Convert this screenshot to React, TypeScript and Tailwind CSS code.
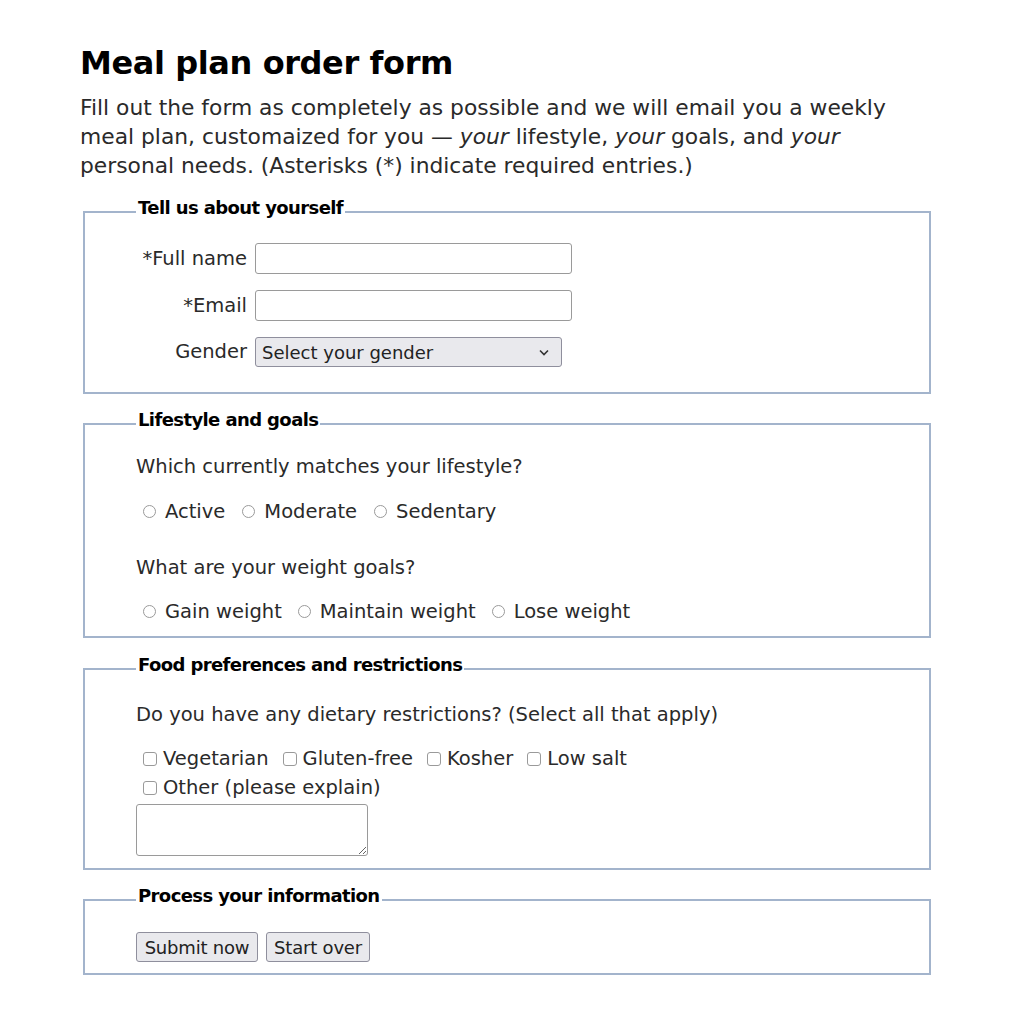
import React from 'react';

const body = { fontFamily: '"DejaVu Sans", Verdana, sans-serif' };

function Radio({ name, label }: { name: string; label: string }) {
  return (
    <label className="flex items-center gap-[9px]">
      <input
        type="radio"
        name={name}
        className="appearance-none w-[13px] h-[13px] rounded-full border border-[#9a9a9a] bg-white"
      />
      <span>{label}</span>
    </label>
  );
}

function Check({ label }: { label: string }) {
  return (
    <label className="flex items-center gap-[6px]">
      <input
        type="checkbox"
        className="appearance-none w-[14px] h-[14px] rounded-[3px] border border-[#9a9a9a] bg-white"
      />
      <span>{label}</span>
    </label>
  );
}

function Section({ title, children, className }: { title: string; children: React.ReactNode; className?: string }) {
  return (
    <fieldset className={`mx-[3px] border-2 border-[#a3b4cc] pl-[51px] pr-4 ${className ?? ''}`}>
      <legend className="px-[2px] pb-[8px] text-[18px] leading-[24px] font-bold text-black tracking-[-0.6px]">
        {title}
      </legend>
      {children}
    </fieldset>
  );
}

export default function App() {
  return (
    <div className="bg-white min-h-[1019px] text-[#2a2a2a]" style={body}>
      <div className="w-[854px] ml-[80px] pt-[43px]">
        <h1 className="text-[32px] leading-[40px] font-bold text-black tracking-[-0.4px]">Meal plan order form</h1>
        <p className="mt-[10px] text-[21.8px] leading-[29px]">
          Fill out the form as completely as possible and we will email you a weekly
          <br />
          meal plan, customaized for you — <em>your</em> lifestyle, <em>your</em> goals, and <em>your</em>
          <br />
          personal needs. (Asterisks (*) indicate required entries.)
        </p>

        <div className="text-[19.5px]">
          <Section title="Tell us about yourself" className="mt-[16px] pt-[15px] pb-[25px]">
            <div className="grid grid-cols-[111px_auto] gap-x-[8px] gap-y-[16px] items-center justify-start">
              <label className="text-right">*Full name</label>
              <input type="text" className="w-[317px] h-[31px] rounded-[3px] border border-[#9a9a9a] bg-white" />
              <label className="text-right">*Email</label>
              <input type="email" className="w-[317px] h-[31px] rounded-[3px] border border-[#9a9a9a] bg-white" />
              <label className="text-right">Gender</label>
              <div className="w-[307px] h-[30px] rounded-[3px] border border-[#8f8f9d] bg-[#e9e9ed] flex items-center justify-between pl-[6px] pr-[12px] text-[18px] text-[#222]">
                <span>Select your gender</span>
                <svg width="10" height="7" viewBox="0 0 10 7" fill="none">
                  <path d="M1 1.5L5 5.5L9 1.5" stroke="#333" strokeWidth="1.6" />
                </svg>
              </div>
            </div>
          </Section>

          <Section title="Lifestyle and goals" className="mt-[14px] pt-[12px] pb-[10px]">
            <p className="leading-[29px]">Which currently matches your lifestyle?</p>
            <div className="mt-[16px] ml-[7px] flex gap-[17px] leading-[29px]">
              <Radio name="life" label="Active" />
              <Radio name="life" label="Moderate" />
              <Radio name="life" label="Sedentary" />
            </div>
            <p className="mt-[27px] leading-[29px]">What are your weight goals?</p>
            <div className="mt-[15px] ml-[7px] flex gap-[16px] leading-[29px]">
              <Radio name="goal" label="Gain weight" />
              <Radio name="goal" label="Maintain weight" />
              <Radio name="goal" label="Lose weight" />
            </div>
          </Section>

          <Section title="Food preferences and restrictions" className="mt-[15px] pt-[15px] pb-[12px]">
            <p className="leading-[29px]">Do you have any dietary restrictions? (Select all that apply)</p>
            <div className="mt-[15px] ml-[7px] flex gap-[14px] leading-[29px]">
              <Check label="Vegetarian" />
              <Check label="Gluten-free" />
              <Check label="Kosher" />
              <Check label="Low salt" />
            </div>
            <div className="ml-[7px] flex leading-[29px]">
              <Check label="Other (please explain)" />
            </div>
            <textarea className="mt-[2px] block w-[232px] h-[52px] rounded-[3px] border border-[#9a9a9a] bg-white resize" />
          </Section>

          <Section title="Process your information" className="mt-[14px] pt-[16px] pb-[11px]">
            <div className="flex gap-[8px] text-[18px] tracking-[-0.2px] text-[#222]">
              <button className="w-[122px] h-[30px] rounded-[3px] border border-[#8f8f9d] bg-[#e9e9ed]">Submit now</button>
              <button className="w-[104px] h-[30px] rounded-[3px] border border-[#8f8f9d] bg-[#e9e9ed]">Start over</button>
            </div>
          </Section>
        </div>
      </div>
    </div>
  );
}
